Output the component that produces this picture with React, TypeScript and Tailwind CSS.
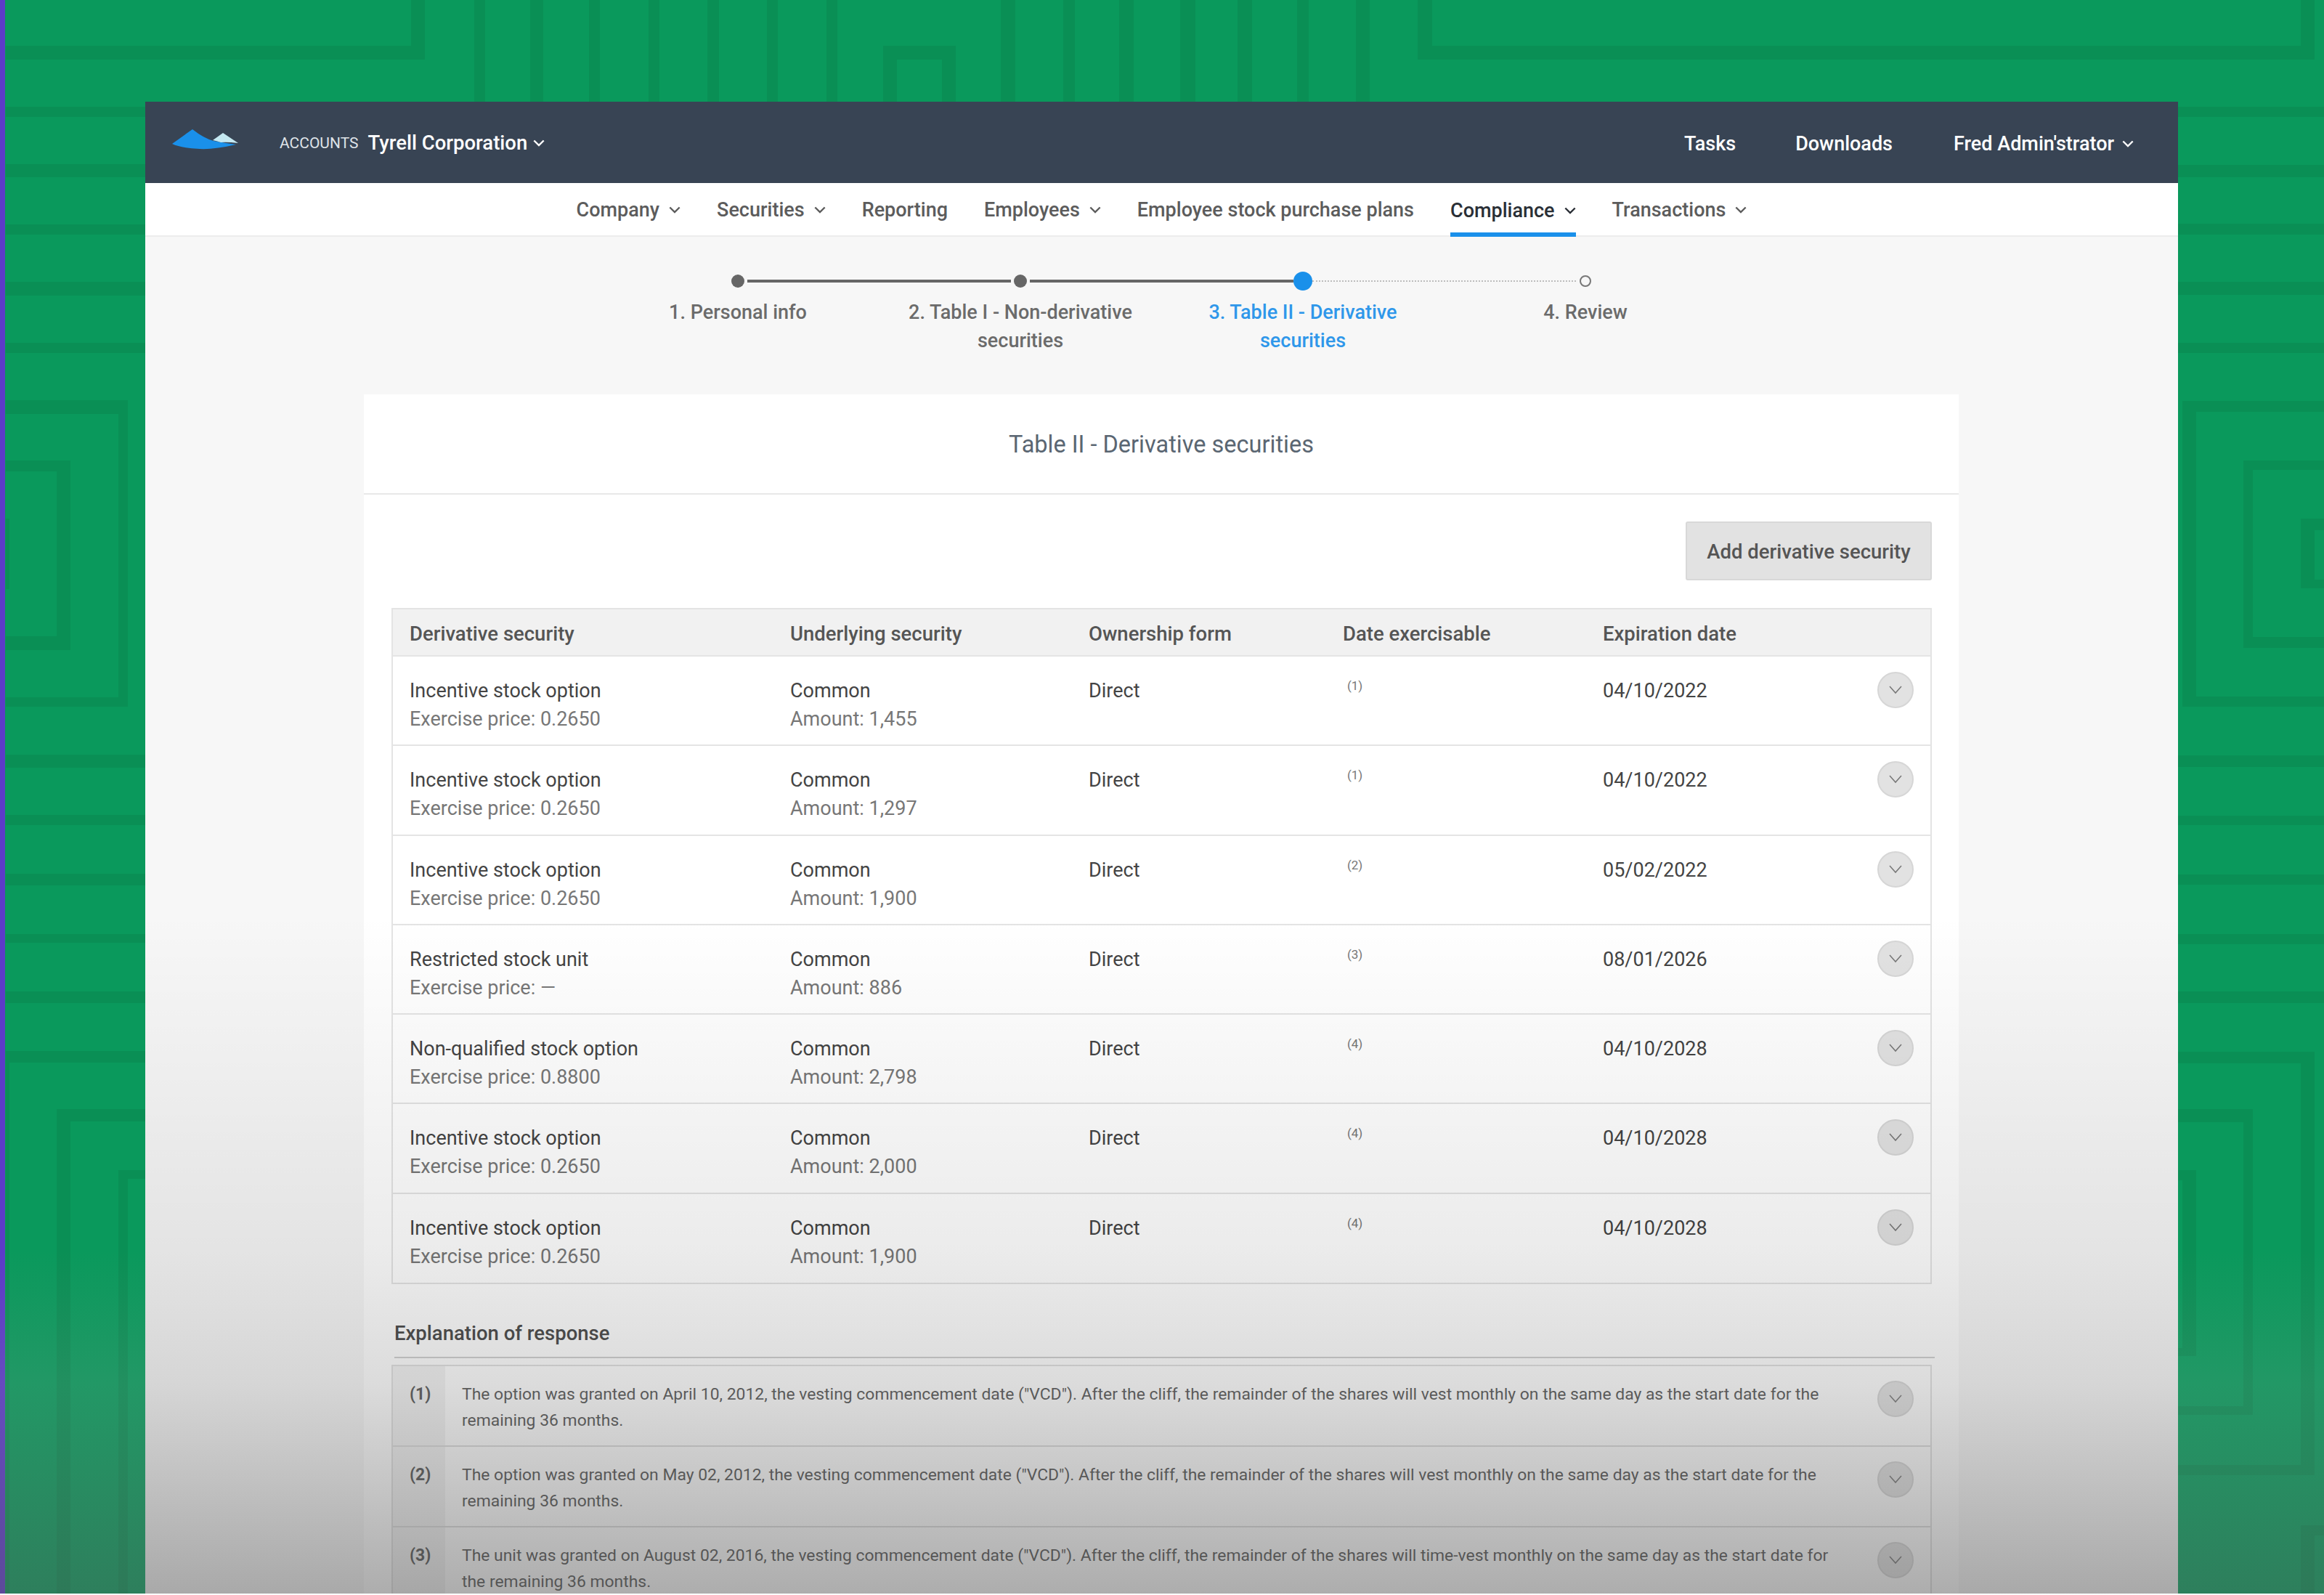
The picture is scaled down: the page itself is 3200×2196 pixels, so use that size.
const BANDS: [number, number, number, number][] = [
  // top strip
  [8, 63, 577, 19], [566, 0, 19, 82],
  [653, 0, 15, 140], [730, 0, 18, 140], [811, 0, 15, 140], [893, 0, 15, 140], [974, 0, 16, 140], [1056, 0, 15, 140], [1138, 0, 15, 140],
  [1216, 63, 100, 19], [1216, 63, 19, 77], [1297, 63, 19, 77],
  [1378, 0, 20, 140], [1464, 0, 16, 140], [1541, 0, 20, 140], [1625, 0, 21, 140], [1704, 0, 20, 140], [1786, 0, 16, 140], [1867, 0, 19, 140],
  [1952, 0, 20, 82], [1952, 63, 1235, 19], [3168, 0, 19, 82],
  // left strip
  [8, 147, 192, 14], [8, 226, 192, 18], [8, 309, 192, 14], [8, 388, 192, 19], [8, 472, 192, 14],
  [8, 551, 168, 19], [163, 551, 13, 422], [8, 960, 168, 13],
  [8, 634, 89, 15], [78, 634, 19, 261], [8, 876, 89, 19],
  [8, 714, 5, 97],
  [8, 1039, 192, 18], [8, 1122, 192, 14], [8, 1203, 192, 16], [8, 1286, 192, 12], [8, 1365, 192, 16],
  [8, 1447, 192, 16], [8, 1447, 5, 749],
  [78, 1527, 122, 17], [78, 1527, 19, 669],
  [163, 1611, 37, 12], [163, 1611, 13, 585],
  // right strip
  [2999, 147, 201, 14], [2999, 227, 201, 17], [2999, 308, 201, 15], [2999, 388, 201, 18], [2999, 472, 201, 14],
  [3005, 552, 195, 15], [3005, 552, 19, 421], [3005, 959, 195, 14],
  [3089, 634, 111, 13], [3089, 634, 13, 258], [3089, 877, 111, 15],
  [3168, 714, 32, 16], [3168, 714, 19, 96], [3168, 798, 32, 12],
  [2999, 1040, 201, 16], [2999, 1123, 201, 13], [2999, 1204, 201, 14], [2999, 1286, 201, 14], [2999, 1365, 201, 16],
  [2999, 1448, 188, 16], [3168, 1448, 19, 583], [2999, 2017, 188, 14],
  [2999, 1527, 103, 18], [3089, 1527, 13, 421], [2999, 1936, 103, 12],
  [2999, 1611, 25, 14], [3005, 1611, 19, 256], [2999, 1856, 25, 11],
  [3168, 2100, 19, 96], [3168, 2100, 32, 14],
];

const Chevron = ({ className }: { className: string }) => (
  <svg viewBox="0 0 12 8" fill="none" stroke="currentColor" strokeWidth="1.8" className={className}>
    <path d="M1 1l5 5 5-5" />
  </svg>
);

const CircleBtn = ({ className }: { className: string }) => (
  <div className={`w-[50px] h-[50px] rounded-full bg-[#e2e2e2] border-2 border-[#d6d6d6] flex items-center justify-center text-[#777] ${className}`}>
    <svg viewBox="0 0 18 12" fill="none" stroke="currentColor" strokeWidth="1.5" className="w-[18px] h-[12px]">
      <path d="M1 1l8 9 8-9" />
    </svg>
  </div>
);

const NAV: [string, boolean, boolean][] = [
  ["Company", true, false],
  ["Securities", true, false],
  ["Reporting", false, false],
  ["Employees", true, false],
  ["Employee stock purchase plans", false, false],
  ["Compliance", true, true],
  ["Transactions", true, false],
];

const ROWS: [string, string, string, string, string][] = [
  ["Incentive stock option", "0.2650", "1,455", "(1)", "04/10/2022"],
  ["Incentive stock option", "0.2650", "1,297", "(1)", "04/10/2022"],
  ["Incentive stock option", "0.2650", "1,900", "(2)", "05/02/2022"],
  ["Restricted stock unit", "—", "886", "(3)", "08/01/2026"],
  ["Non-qualified stock option", "0.8800", "2,798", "(4)", "04/10/2028"],
  ["Incentive stock option", "0.2650", "2,000", "(4)", "04/10/2028"],
  ["Incentive stock option", "0.2650", "1,900", "(4)", "04/10/2028"],
];

const NOTES: [string, string, string][] = [
  ["(1)", 'The option was granted on April 10, 2012, the vesting commencement date ("VCD"). After the cliff, the remainder of the shares will vest monthly on the same day as the start date for the', "remaining 36 months."],
  ["(2)", 'The option was granted on May 02, 2012, the vesting commencement date ("VCD"). After the cliff, the remainder of the shares will vest monthly on the same day as the start date for the', "remaining 36 months."],
  ["(3)", 'The unit was granted on August 02, 2016, the vesting commencement date ("VCD"). After the cliff, the remainder of the shares will time-vest monthly on the same day as the start date for', "the remaining 36 months."],
];

const COLS = "grid grid-cols-[524px_411px_350px_358px_1fr] pl-[23px]";

export default function App() {
  return (
    <div className="bg-white font-['Roboto',sans-serif]">
      <div className="relative h-[2194px] overflow-hidden bg-[#0a995c]">
        <svg className="absolute inset-0 w-[3200px] h-[2194px]" viewBox="0 0 3200 2194">
          {BANDS.map(([x, y, w, h], i) => (
            <rect key={i} x={x} y={y} width={w} height={h} fill="#0a8f55" />
          ))}
        </svg>
        <div className="absolute left-0 top-0 bottom-0 w-[7px] bg-[#5c3bc8]" />

        <div className="relative ml-[200px] mt-[140px] w-[2799px] h-[2054px] bg-[#f7f7f7] overflow-hidden">
          {/* top bar */}
          <div className="h-[112px] bg-[#384454] flex items-center text-white">
            <svg viewBox="17 28 91 28" className="w-[91px] h-[28px] ml-[37px] -mt-[8px]">
              <path d="M17 48 L45 28 Q60 40 74 44 Q90 47 105 49 Q75 56 55 55 Q30 54 17 48Z" fill="#1a90ea" />
              <path d="M73 43 L87 33 L108 47 Q92 45 84 46 Q78 44 73 43Z" fill="#c5e9f2" />
            </svg>
            <span className="ml-[57px] pt-[4px] text-[21px] uppercase text-[#dfe3e8]">Accounts</span>
            <span className="ml-[13px] pt-[2px] text-[27.5px] font-medium">Tyrell Corporation</span>
            <Chevron className="ml-[8px] mt-[2px] w-[16px] h-[11px]" />
            <div className="ml-auto flex items-center text-[27px] font-medium pr-[61px] pt-[4px]">
              <span>Tasks</span>
              <span className="ml-[82px]">Downloads</span>
              <span className="ml-[84px]">Fred Admin'strator</span>
              <Chevron className="ml-[11px] w-[16px] h-[11px]" />
            </div>
          </div>

          {/* nav */}
          <div className="h-[74px] bg-white border-b-2 border-[#ececec] flex justify-center items-stretch gap-[50px] text-[27px] font-medium text-[#5c5c5c]">
            {NAV.map(([label, chev, active]) => (
              <div
                key={label}
                className={`flex items-center ${active ? "text-[#2a2f36] border-b-[6px] border-[#1a90ea] pt-[8px] -mb-[2px]" : "pt-[2px]"}`}
              >
                <span>{label}</span>
                {chev && <Chevron className="ml-[13px] w-[16px] h-[11px]" />}
              </div>
            ))}
          </div>

          {/* stepper */}
          <div className="w-[1193px] mx-auto mt-[48px] flex items-center h-[26px]">
            <div className="w-[26px] flex justify-center"><div className="w-[18px] h-[18px] rounded-full bg-[#666]" /></div>
            <div className="flex-1 h-[4px] bg-[#666]" />
            <div className="w-[26px] flex justify-center"><div className="w-[18px] h-[18px] rounded-full bg-[#666]" /></div>
            <div className="flex-1 h-[4px] bg-[#666]" />
            <div className="w-[26px] flex justify-center"><div className="w-[26px] h-[26px] rounded-full bg-[#1a90ea]" /></div>
            <div className="flex-1 border-t-2 border-dotted border-[#bdbdbd]" />
            <div className="w-[26px] flex justify-center"><div className="w-[16px] h-[16px] rounded-full border-2 border-[#777] bg-[#f7f7f7]" /></div>
          </div>
          <div className="w-[1556px] mx-auto mt-[11px] flex text-center text-[27px] leading-[39px] font-medium text-[#6b6b6b]">
            <div className="w-[389px]">1. Personal info</div>
            <div className="w-[389px]">2. Table I - Non-derivative<br />securities</div>
            <div className="w-[389px] text-[#2f97ea]">3. Table II - Derivative<br />securities</div>
            <div className="w-[389px]">4. Review</div>
          </div>

          {/* card */}
          <div className="ml-[301px] mt-[54px] w-[2196px] bg-white">
            <div className="h-[138px] pt-[3px] border-b-2 border-[#e8e8e8] flex items-center justify-center text-[32.5px] text-[#5a6672]">
              Table II - Derivative securities
            </div>
            <div className="flex justify-end pr-[37px] pt-[37px]">
              <div className="w-[339px] h-[81px] pt-[2px] rounded-[3px] bg-[#e2e2e2] border-2 border-[#d8d8d8] flex items-center justify-center text-[27.5px] font-medium text-[#555]">
                Add derivative security
              </div>
            </div>

            <div className="ml-[38px] mr-[37px] mt-[38px] border-2 border-[#e4e4e4]">
              <div className={`${COLS} h-[65px] pt-[4px] items-center bg-[#f1f1f1] text-[27.5px] font-medium text-[#555] border-b-2 border-[#e4e4e4]`}>
                <div>Derivative security</div>
                <div>Underlying security</div>
                <div>Ownership form</div>
                <div>Date exercisable</div>
                <div>Expiration date</div>
              </div>
              {ROWS.map((r, i) => (
                <div key={i} className={`${COLS} relative pt-[28px] text-[27px] leading-[39px] ${i < 6 ? "h-[123.3px] border-b-2 border-[#e4e4e4]" : "h-[122px]"}`}>
                  <div className="text-[#444]">{r[0]}<div className="text-[#777]">Exercise price: {r[1]}</div></div>
                  <div className="text-[#444]">Common<div className="text-[#777]">Amount: {r[2]}</div></div>
                  <div className="text-[#444]">Direct</div>
                  <div className="pl-[6px] text-[17px] leading-[24px] text-[#777]">{r[3]}</div>
                  <div className="text-[#444]">{r[4]}</div>
                  <CircleBtn className="absolute right-[23px] top-[21px]" />
                </div>
              ))}
            </div>

            <div className="ml-[42px] mr-[33px] mt-[48px] pb-[13px] border-b-2 border-[#cfcfcf] text-[27.5px] leading-[39px] font-medium text-[#444]">
              Explanation of response
            </div>
            <div className="ml-[38px] mr-[37px] mt-[9px] border-2 border-[#e0e0e0]">
              {NOTES.map((n, i) => (
                <div key={i} className="relative flex h-[111px] border-b-2 border-[#dcdcdc]">
                  <div className="w-[72px] pl-[23px] pt-[21px] bg-[#f3f3f3] text-[23px] leading-[36px] font-bold text-[#555]">{n[0]}</div>
                  <div className="pl-[23px] pt-[21px] text-[22.9px] leading-[36px] text-[#555] whitespace-nowrap">
                    {n[1]}<br />{n[2]}
                  </div>
                  <CircleBtn className="absolute right-[23px] top-[20px]" />
                </div>
              ))}
            </div>
          </div>

          <div className="absolute left-0 right-0 top-[1117px] bottom-0 pointer-events-none bg-[linear-gradient(to_bottom,rgba(0,0,0,0)_0%,rgba(0,0,0,0.08)_50%,rgba(0,0,0,0.08)_100%)]" />
        </div>

        <div className="absolute left-0 right-0 top-[1722px] h-[472px] pointer-events-none bg-[linear-gradient(to_bottom,rgba(147,147,147,0)_0%,rgba(147,147,147,0.175)_39%,rgba(93,93,93,0.434)_100%)]" />
      </div>
    </div>
  );
}
